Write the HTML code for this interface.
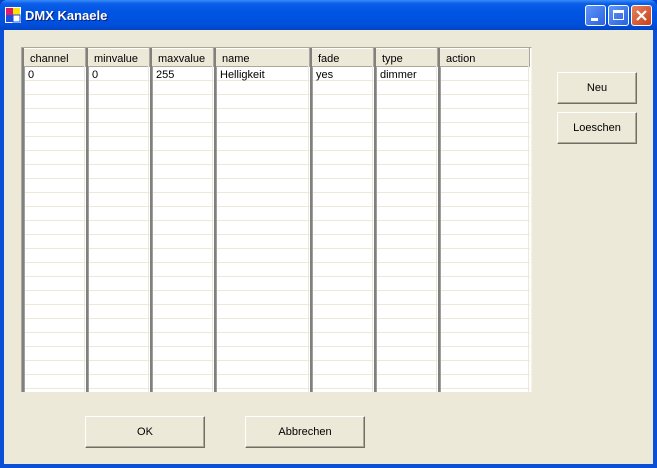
<!DOCTYPE html>
<html><head><style>
*{margin:0;padding:0;box-sizing:border-box}
body{width:657px;height:468px;overflow:hidden;background:#0842c8;font-family:"Liberation Sans",Tahoma,sans-serif;font-size:11px;color:#000}
#win{position:absolute;left:0;top:0;width:657px;height:468px;background:#0a4fd6;border-radius:7px 7px 0 0}
#title{position:absolute;left:0;top:0;width:657px;height:30px;border-radius:7px 7px 0 0;background:linear-gradient(#3a8cf8 0%,#0a5ee8 12%,#0054e3 40%,#0050dd 80%,#0144c4 100%)}
#title .t{position:absolute;left:25px;top:8px;color:#fff;font-weight:bold;font-size:13px;text-shadow:1px 1px #0a1f70}
#client{position:absolute;left:4px;top:30px;width:649px;height:434px;background:#ECE9D8}
.tb{position:absolute;top:5px;width:21px;height:21px;border:1px solid #fff;border-radius:3px;background:linear-gradient(135deg,#5f96f8,#2a62e0)}
.tb.x{background:linear-gradient(135deg,#e8805e,#c8401a)}
.grid{position:absolute;left:21px;top:47px;width:511px;height:345px;background:#fff;border-top:1px solid #ACA899;border-left:1px solid #ACA899;border-right:1px solid #f4f3ee;overflow:hidden}
.col{position:absolute;top:0;height:345px;border-left:2px solid #808080;box-shadow:inset 1px 0 #a0a0a0;background:repeating-linear-gradient(to bottom,#fff 0,#fff 13px,#ECE9D8 13px,#ECE9D8 14px);background-position:0 5px}
.col::after{content:"";position:absolute;right:1px;top:0;bottom:0;width:1px;background:#ECE9D8}
.hd{position:absolute;left:0;right:0;top:0;height:19px;background:#ECE9D8;border-bottom:1px solid #aca899;border-right:2px solid #aca899;padding:5px 0 0 6px;line-height:12px;box-shadow:inset 0 1px #fff}
.c{position:absolute;left:4px;top:21px;line-height:12px}
.btn{position:absolute;background:#ECE9D8;border:1px solid;border-color:#fff #716f64 #716f64 #fff;box-shadow:inset -1px -1px #aca899;text-align:center;font-size:11px}
</style></head><body>
<div id="win">
<div id="title">
<svg style="position:absolute;left:5px;top:7px" width="16" height="16"><rect x="0" y="0" width="16" height="16" fill="#fff"/><rect x="1" y="1" width="7" height="7" fill="#e01a6a"/><rect x="8" y="1" width="7" height="7" fill="#ffe400"/><rect x="1" y="8" width="7" height="7" fill="#1a4ee0"/><rect x="8" y="8" width="7" height="7" fill="#fff" stroke="#1a4ee0"/></svg>
<div class="t">DMX Kanaele</div>
<div class="tb" style="left:585px"><div style="position:absolute;left:5px;top:12px;width:7px;height:3px;background:#fff"></div></div>
<div class="tb" style="left:608px"><div style="position:absolute;left:4px;top:4px;width:11px;height:10px;border:1px solid #fff;border-top-width:3px"></div></div>
<div class="tb x" style="left:631px"><svg width="19" height="19" style="position:absolute;left:0;top:0"><path d="M5 5L14 14M14 5L5 14" stroke="#fff" stroke-width="2.2"/></svg></div>
</div>
<div id="client">
<div class="grid" style="left:17px;top:17px">
<div class="col" style="left:0;width:64px"><div class="hd">channel</div><div class="c">0</div></div>
<div class="col" style="left:64px;width:64px"><div class="hd">minvalue</div><div class="c">0</div></div>
<div class="col" style="left:128px;width:64px"><div class="hd">maxvalue</div><div class="c">255</div></div>
<div class="col" style="left:192px;width:96px"><div class="hd">name</div><div class="c">Helligkeit</div></div>
<div class="col" style="left:288px;width:64px"><div class="hd">fade</div><div class="c">yes</div></div>
<div class="col" style="left:352px;width:64px"><div class="hd">type</div><div class="c">dimmer</div></div>
<div class="col" style="left:416px;width:92px"><div class="hd">action</div></div>
</div>
<div class="btn" style="left:553px;top:42px;width:80px;height:32px;line-height:30px">Neu</div>
<div class="btn" style="left:553px;top:82px;width:80px;height:32px;line-height:30px">Loeschen</div>
<div class="btn" style="left:81px;top:386px;width:120px;height:32px;line-height:30px">OK</div>
<div class="btn" style="left:241px;top:386px;width:120px;height:32px;line-height:30px">Abbrechen</div>
</div>
</div>
</body></html>
